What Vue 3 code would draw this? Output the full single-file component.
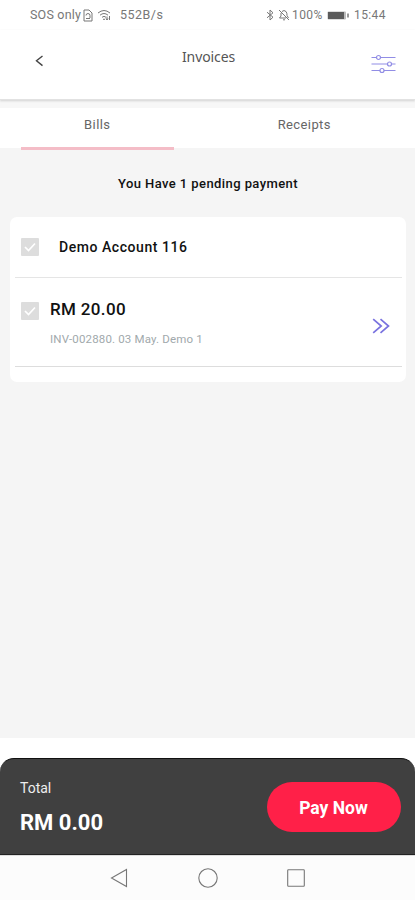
<script setup>
import { ref } from 'vue'

const tabs = ['Bills', 'Receipts']
const active = ref(0)
</script>

<template>
  <div class="screen">
    <div class="status">
      <span class="carrier">SOS only</span>
      <svg class="sim" width="10" height="13" viewBox="0 0 10 13"><path d="M1 1h5l3 3v8H1z" /><path d="M3 6.500a2 2 0 0 1 4 0V9M3 9.500h4" /></svg>
      <svg class="wifi" width="14" height="12" viewBox="0 0 14 12"><path d="M1 4Q7-1 13 4M3 6.200Q7 2.800 11 6.200M5 8.300Q7 6.300 9 8.300M6 10.300h2M10 7.500v3.500M12.500 7v4M9 9.500l1 1.500 1-1.500" /></svg>
      <span class="speed">552B/s</span>
      <span class="grow"></span>
      <svg class="bt" width="8" height="12" viewBox="0 0 8 12"><path d="M1 3.200l6 5L4 11V1l3 2.800-6 5" /></svg>
      <svg class="bell" width="12" height="12" viewBox="0 0 12 12"><path d="M1 1l10 10M3 4v3L1.500 9H8M4 2.500Q6 .5 8 2.500 9.200 4 9 6.500L10.500 9M5 10.800h2" /></svg>
      <span class="percent">100%</span>
      <svg class="battery" width="23" height="9" viewBox="0 0 23 9"><rect x=".5" y=".5" width="18.500" height="8" rx="1" fill="#bbb" /><rect x="1" y="1" width="16" height="7" fill="#5b5b5b" /><path d="M21 2.500v4" stroke="#777" stroke-width="1.500" /></svg>
      <span class="clock">15:44</span>
    </div>

    <header class="header">
      <svg class="back" width="10" height="12" viewBox="0 0 10 12"><path d="M8.500 1L2.500 5.800l6 4.800" /></svg>
      <h1>Invoices</h1>
      <svg class="filter" width="25" height="20" viewBox="0 0 25 20"><path d="M.5 3.500h5M9.500 3.500h15M.5 10h16M20.500 10h4M.5 16.500h8.500M13 16.500h11.500" /><circle cx="7.500" cy="3.500" r="2" /><circle cx="18.500" cy="10" r="2" /><circle cx="11" cy="16.500" r="2" /></svg>
    </header>

    <nav class="tabs">
      <button v-for="(tab, i) in tabs" :key="tab" :class="{ active: active === i }" @click="active = i"><span>{{ tab }}</span></button>
    </nav>

    <main class="content">
      <p class="notice">You Have 1 pending payment</p>
      <section class="card">
        <div class="account">
          <svg class="check" width="18" height="18" viewBox="0 0 18 18"><rect width="18" height="18" rx="1" /><path d="M4 9l3.500 3.500L14 5.500" /></svg>
          <span class="name">Demo Account 116</span>
        </div>
        <div class="invoice">
          <svg class="check" width="18" height="18" viewBox="0 0 18 18"><rect width="18" height="18" rx="1" /><path d="M4 9l3.500 3.500L14 5.500" /></svg>
          <div class="details">
            <span class="amount">RM 20.00</span>
            <span class="meta">INV-002880. 03 May. Demo 1</span>
          </div>
          <svg class="more" width="18" height="16" viewBox="0 0 18 16"><path d="M1.200 1.200L9.200 8l-8 6.800M8.500 1.200L16.500 8l-8 6.800" /></svg>
        </div>
      </section>
    </main>

    <footer class="footer">
      <div class="total">
        <div class="sum"><span class="label">Total</span><span class="value">RM 0.00</span></div>
        <button class="pay"><span>Pay Now</span></button>
      </div>
    </footer>

    <div class="system">
      <svg width="18" height="20" viewBox="0 0 18 20"><path d="M16.500 1.500v17L1.500 10z" /></svg>
      <svg width="20" height="20" viewBox="0 0 20 20"><circle cx="10" cy="10" r="9.200" /></svg>
      <svg width="18" height="18" viewBox="0 0 18 18"><rect x=".7" y=".7" width="16.600" height="16.600" rx=".7" /></svg>
    </div>
  </div>
</template>

<style>
body { margin: 0; background: #fff; }
</style>

<style scoped>
* { box-sizing: border-box; }
.screen { width: 415px; height: 900px; display: flex; flex-direction: column; overflow: hidden; background: #fff; font-family: Roboto, "Liberation Sans", sans-serif; }
button { font: inherit; border: 0; padding: 0; background: none; }
svg { flex: none; fill: none; }
span { white-space: nowrap; }
.status { height: 30px; flex: none; display: flex; align-items: center; padding: 0 29px 0 30px; font-size: 12px; line-height: 14px; color: #777; }
.status svg { stroke: #777; stroke-width: 1; }
.status .battery { stroke: none; margin-left: 4px; }
.carrier { width: 52px; font-size: 12.500px; letter-spacing: .2px; }
.sim { margin-left: 1px; }
.wifi { margin-left: 4px; }
.speed { margin-left: 9px; font-size: 12.500px; letter-spacing: .5px; }
.grow { flex: 1; }
.bell { margin-left: 4px; }
.percent { width: 31px; margin-left: 2px; letter-spacing: .4px; }
.clock { width: 32px; margin-left: 4px; letter-spacing: .4px; }
.header { position: relative; z-index: 1; height: 70px; flex: none; display: grid; grid-template-columns: 45px 1fr 45px; align-items: start; padding: 0 19px 0 34px; background: #fff; border-bottom: 1px solid #e2e2e2; box-shadow: 0 1px 2px #d2d2d2; }
.back { margin-top: 25px; stroke: #444; stroke-width: 1.400; }
h1 { margin: 17px 0 0; padding-right: 13px; text-align: center; font: 400 14px/20px "Noto Sans", sans-serif; letter-spacing: -.1px; color: #555; }
.filter { justify-self: end; margin-top: 24px; stroke: #918de5; stroke-width: 1.200; }
.tabs { height: 48px; flex: none; display: grid; grid-template-columns: 1fr 1fr; padding: 0 14px 0 0; border-top: 8px solid #f7f7f7; background: #fff; }
.tabs button { position: relative; height: 42px; font-size: 13px; line-height: 16px; letter-spacing: .4px; color: #666; padding-bottom: 8px; }
.tabs button:first-child { margin-left: 21px; margin-right: 27px; }
.tabs button:last-child { margin-left: 7px; }
.tabs .active { border-bottom: 3px solid #f4bdc7; padding-bottom: 5px; z-index: 1; }
.content { flex: 1; background: #f5f5f5; padding: 27px 9px 0 10px; }
.notice { margin: 0; text-align: center; font-size: 13px; line-height: 18px; font-weight: 500; letter-spacing: .42px; color: #111; }
.card { height: 165px; margin-top: 24px; padding: 0 4px 0 5px; border-radius: 7px; background: #fff; }
.account { height: 61px; display: flex; align-items: center; padding-left: 6px; border-bottom: 1px solid #e5e5e5; }
.check rect { fill: #ddd; }
.check path { stroke: #fff; stroke-width: 1.700; }
.account .check { margin-top: -1px; }
.name { margin-left: 20px; font-size: 14px; font-weight: 500; letter-spacing: .55px; color: #111; }
.invoice { height: 89px; display: flex; align-items: flex-start; padding: 24px 12px 0 6px; border-bottom: 1px solid #ddd; }
.invoice .check { margin-top: -.5px; }
.details { flex: 1; display: flex; flex-direction: column; margin-left: 11px; }
.amount { font-size: 17px; line-height: 18px; font-weight: 500; letter-spacing: .35px; color: #111; margin-top: -2px; }
.meta { margin-top: 14px; font-size: 11.500px; line-height: 14px; letter-spacing: .16px; color: #a1a9ac; }
.more { margin-top: 16px; stroke: #7972df; stroke-width: 1.700; }
.footer { height: 117px; flex: none; padding-top: 20px; background: #fff; }
.total { height: 97px; display: flex; align-items: flex-start; justify-content: space-between; padding: 21px 14px 0 20px; border-top: 1px solid #111; border-bottom: 1px solid #222; border-radius: 14px 14px 0 0; background: #404040; color: #fff; }
.sum { display: flex; flex-direction: column; }
.label { font-size: 14px; line-height: 16px; color: #eee; }
.value { margin-top: 15px; font-size: 22px; line-height: 24px; font-weight: 700; }
.pay { width: 134px; height: 50px; margin-top: 2px; padding: 1px 1px 0 0; border-radius: 25px; background: #ff2048; color: #fff; font-size: 17.500px; font-weight: 700; }
.system { height: 45px; flex: none; display: flex; justify-content: space-between; align-items: center; padding: 0 110px; background: #fcfcfc; border-top: 1px solid #ddd; }
.system svg { stroke: #777; stroke-width: 1.100; }
</style>
